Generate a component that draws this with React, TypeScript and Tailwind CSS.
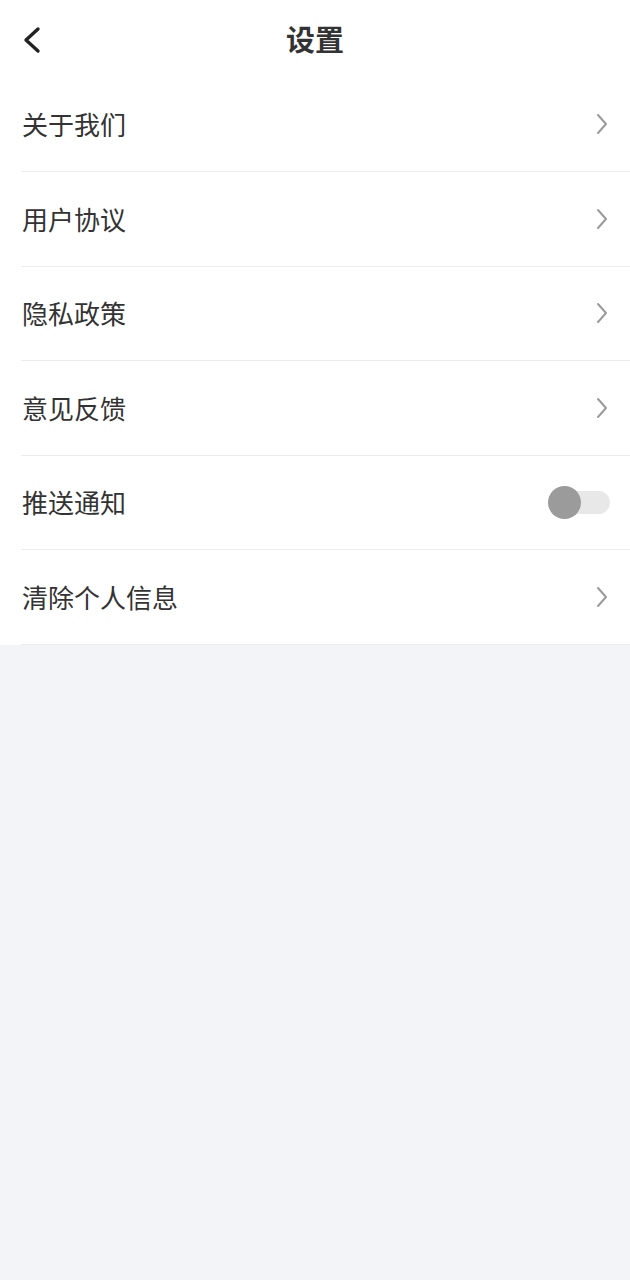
import React from "react"

const font = { fontFamily: '"Noto Sans CJK SC", "Noto Sans", sans-serif' }

// 设置页的列表项
const items = [
  { label: "关于我们", type: "link" },
  { label: "用户协议", type: "link" },
  { label: "隐私政策", type: "link" },
  { label: "意见反馈", type: "link" },
  { label: "推送通知", type: "switch" },
  { label: "清除个人信息", type: "link" },
]

const ChevronRight = () => (
  <svg width="14" height="22" viewBox="0 0 14 22" fill="none">
    <path d="M3 2 L11 11 L3 20" stroke="#9a9a9a" strokeWidth="2" strokeLinecap="round" strokeLinejoin="round" />
  </svg>
)

const Toggle = () => (
  <div className="relative w-[62px] h-[33px] flex items-center">
    <div className="w-full h-[23px] rounded-full bg-[#e8e8e8]" />
    <div className="absolute left-0 top-0 w-[33px] h-[33px] rounded-full bg-[#9b9b9b]" />
  </div>
)

export default function App() {
  return (
    <div className="min-h-[1280px] bg-[#f3f4f8] text-[#333]" style={font}>
      <div className="bg-white">
        {/* 顶部导航 */}
        <div className="relative h-[77.5px] flex items-center justify-center">
          <button className="absolute left-[18px] top-[22px] p-1">
            <svg width="20" height="28" viewBox="0 0 20 28" fill="none">
              <path d="M16 3 L4 14 L16 25" stroke="#222" strokeWidth="3.4" strokeLinecap="round" strokeLinejoin="round" />
            </svg>
          </button>
          <h1 className="text-[29px] font-bold text-[#333] leading-none">设置</h1>
        </div>

        <div className="pl-[21px]">
          {items.map((item) => (
            <div
              key={item.label}
              className="h-[94.5px] flex items-center justify-between border-b border-[#ececec] pr-[20px]"
            >
              <span className="text-[26px] leading-none text-[#333] pl-px">{item.label}</span>
              {item.type === "switch" ? (
                <Toggle />
              ) : (
                <div className="pr-[1px]">
                  <ChevronRight />
                </div>
              )}
            </div>
          ))}
        </div>
      </div>
    </div>
  )
}
